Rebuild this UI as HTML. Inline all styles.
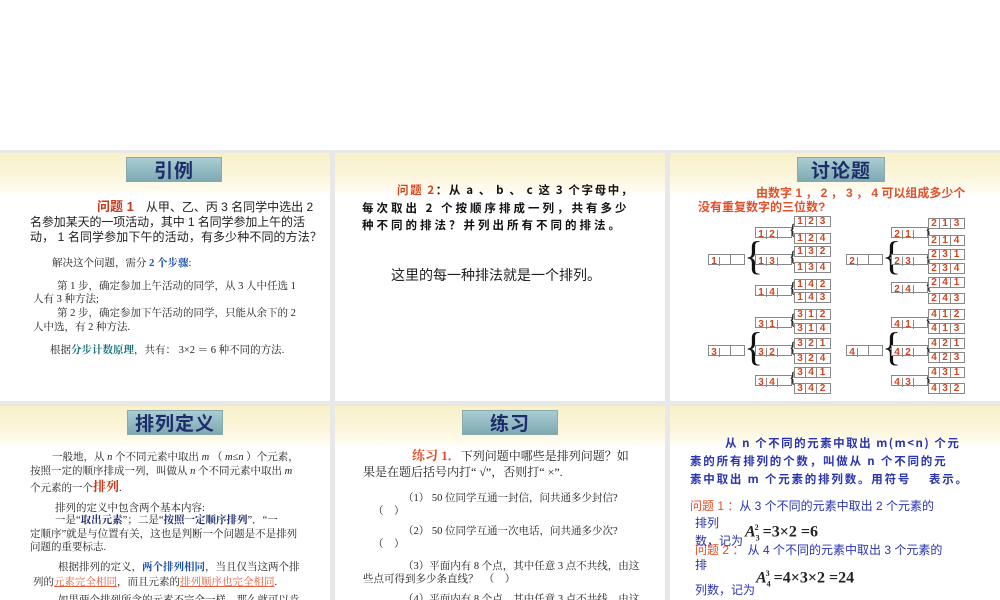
<!DOCTYPE html>
<html><head><meta charset="utf-8">
<style>
*{margin:0;padding:0;box-sizing:border-box}
body{width:1000px;height:600px;background:#fff;position:relative;overflow:hidden;font-family:"Liberation Serif","Noto Serif CJK SC","Noto Sans CJK SC",serif;color:#222}
.bg{position:absolute;left:0;top:150px;width:1000px;height:450px;background:#e8e8e8}
.p{position:absolute;background:#fff;overflow:hidden}
.band{position:absolute;left:0;top:0;width:100%;height:40px;background:linear-gradient(#f7f0c8,#fbf6dc 60%,#fffdf4);}
.t{position:absolute;height:25px;background:linear-gradient(#a9cdd3,#7fa9b1);border:1px solid #8aa;color:#1d2d6b;font:bold 19px/24px "Noto Sans CJK SC",sans-serif;text-align:center;letter-spacing:1px}
.l{position:absolute;white-space:nowrap;font-family:"Liberation Sans","Noto Sans CJK SC",sans-serif;font-size:11px;line-height:14px}
.s{font-family:"Liberation Serif","Noto Serif CJK SC",serif}
.red{color:#c8381a;font-weight:bold}
.blue{color:#1a4fa8;font-weight:bold}
.teal{color:#17707a;font-weight:bold}
.c{position:absolute;height:11px;border:1px solid #888;background:#fff;color:#d0461e;font:bold 10px/9px "Liberation Sans",sans-serif}
.c span{display:inline-block;width:11px;height:9px;text-align:center;border-right:1px solid #888}
.c span:last-child{border-right:none}
.br{position:absolute;font-family:"Liberation Serif",serif;color:#111}
.bt{color:#2a34b0;font-weight:bold;font-family:"Noto Sans CJK SC",sans-serif;font-size:11.5px}
.k{font-weight:bold;font-family:"Noto Sans CJK SC",sans-serif;font-size:11.5px;color:#111}
.b6{color:#2a34b0;font-size:12px}
</style></head><body>
<div class="bg"></div>

<div class="p" style="left:0;top:153px;width:330px;height:248px">
<div class="band"></div>
<div class="t" style="left:126px;top:4px;width:96px">引例</div>
<div class="l" style="left:97px;top:47px;font-size:12px"><span class="red" style="font-size:13px">问题 1</span>　从甲、乙、丙 3 名同学中选出 2</div>
<div class="l" style="left:30px;top:62px;font-size:12px;letter-spacing:-0.1px">名参加某天的一项活动，其中 1 名同学参加上午的活</div>
<div class="l" style="left:30px;top:77px;font-size:12px;letter-spacing:0.1px">动， 1 名同学参加下午的活动，有多少种不同的方法？</div>
<div class="l s" style="left:52px;top:104px;font-size:10.5px">解决这个问题，需分 <span class="blue">2 个步骤</span>:</div>
<div class="l s" style="left:57px;top:127px;font-size:10.5px">第 1 步，确定参加上午活动的同学，从 3 人中任选 1</div>
<div class="l s" style="left:33px;top:140px;font-size:10.5px">人有 3 种方法;</div>
<div class="l s" style="left:57px;top:154px;font-size:10.5px">第 2 步，确定参加下午活动的同学，只能从余下的 2</div>
<div class="l s" style="left:33px;top:168px;font-size:10.5px">人中选，有 2 种方法.</div>
<div class="l s" style="left:50px;top:191px;font-size:10.5px">根据<span class="teal">分步计数原理</span>，共有： 3×2 ＝ 6 种不同的方法.</div>
</div>

<div class="p" style="left:335px;top:153px;width:330px;height:248px">
<div class="band"></div>
<div class="l k" style="left:62px;top:30px;letter-spacing:1.6px"><span style="color:#d0461e">问题 2</span>：从 a 、 b 、 c 这 3 个字母中，</div>
<div class="l k" style="left:27px;top:48px;letter-spacing:3px">每次取出 2 个按顺序排成一列，共有多少</div>
<div class="l k" style="left:27px;top:65px;letter-spacing:3px">种不同的排法？并列出所有不同的排法。</div>
<div class="l" style="left:56px;top:113px;font-size:14px;line-height:18px;font-family:'Noto Sans CJK SC',sans-serif">这里的每一种排法就是一个排列。</div>
</div>

<div class="p" style="left:670px;top:153px;width:330px;height:248px">
<div class="band"></div>
<div class="t" style="left:127px;top:4px;width:88px">讨论题</div>
<div class="l" style="left:86px;top:33px;font-size:12px;color:#e0502a;font-weight:bold">由数字 1 ， 2 ， 3 ， 4 可以组成多少个</div>
<div class="l" style="left:28px;top:47px;font-size:12px;color:#e0502a;font-weight:bold">没有重复数字的三位数?</div>
</div>
<div id="tree"></div>

<div class="p" style="left:0;top:406px;width:330px;height:194px">
<div class="band"></div>
<div class="t" style="left:127px;top:4px;width:96px">排列定义</div>
<div class="l s" style="left:52px;top:45px;font-size:10.5px">一般地，从 <i>n</i> 个不同元素中取出 <i>m</i> （ <i>m</i>≤<i>n</i> ）个元素，</div>
<div class="l s" style="left:30px;top:59px;font-size:10.5px">按照一定的顺序排成一列，叫做从 <i>n</i> 个不同元素中取出 <i>m</i></div>
<div class="l s" style="left:30px;top:74px;font-size:10.5px">个元素的一个<span class="red" style="font-size:13px">排列</span>.</div>
<div class="l s" style="left:55px;top:96px;font-size:10.5px">排列的定义中包含两个基本内容:</div>
<div class="l s" style="left:55px;top:108px;font-size:10.5px">一是“<b style="color:#1d2d6b">取出元素</b>”；二是“<b style="color:#1d2d6b">按照一定顺序排列</b>”．“一</div>
<div class="l s" style="left:30px;top:122px;font-size:10.5px">定顺序”就是与位置有关，这也是判断一个问题是不是排列</div>
<div class="l s" style="left:30px;top:135px;font-size:10.5px">问题的重要标志.</div>
<div class="l s" style="left:58px;top:155px;font-size:10.5px">根据排列的定义，<span class="blue">两个排列相同</span>，当且仅当这两个排</div>
<div class="l s" style="left:33px;top:170px;font-size:10.5px">列的<u style="color:#e06040">元素完全相同</u>，而且元素的<u style="color:#e06040">排列顺序也完全相同</u>.</div>
<div class="l s" style="left:58px;top:188px;font-size:10.5px">如果两个排列所含的元素不完全一样，那么就可以肯</div>
</div>

<div class="p" style="left:335px;top:406px;width:330px;height:194px">
<div class="band"></div>
<div class="t" style="left:127px;top:4px;width:96px">练习</div>
<div class="l s" style="left:77px;top:43px;font-size:12px"><span class="red" style="color:#e0502a;font-size:13px">练习 1．</span>下列问题中哪些是排列问题？如</div>
<div class="l s" style="left:28px;top:59px;font-size:12px">果是在题后括号内打“ √”，否则打“ ×”.</div>
<div class="l s" style="left:68px;top:86px;font-size:10.5px">（1） 50 位同学互通一封信，问共通多少封信?</div>
<div class="l s" style="left:38px;top:99px;font-size:10.5px">（　）</div>
<div class="l s" style="left:68px;top:119px;font-size:10.5px">（2） 50 位同学互通一次电话，问共通多少次?</div>
<div class="l s" style="left:38px;top:132px;font-size:10.5px">（　）</div>
<div class="l s" style="left:68px;top:154px;font-size:10.5px">（3）平面内有 8 个点，其中任意 3 点不共线，由这</div>
<div class="l s" style="left:28px;top:167px;font-size:10.5px">些点可得到多少条直线？　（　）</div>
<div class="l s" style="left:68px;top:187px;font-size:10.5px">（4）平面内有 8 个点，其中任意 3 点不共线，由这</div>
</div>

<div class="p" style="left:670px;top:406px;width:330px;height:194px">
<div class="band"></div>
<div class="l bt" style="left:55px;top:30px;letter-spacing:1.5px">从 n 个不同的元素中取出 m(m&lt;n) 个元</div>
<div class="l bt" style="left:20px;top:48px;letter-spacing:1.8px">素的所有排列的个数，叫做从 n 个不同的元</div>
<div class="l bt" style="left:20px;top:66px;letter-spacing:1.8px">素中取出 m 个元素的排列数。用符号　 表示。</div>
<div class="l b6" style="left:20px;top:93px"><span style="color:#e0502a">问题 1 ：</span>从 3 个不同的元素中取出 2 个元素的</div>
<div class="l b6" style="left:25px;top:110px">排列</div>
<div class="l" style="left:75px;top:112px;font:bold 16px/20px 'Liberation Serif',serif"><i>A</i><sub style="font-size:8px">3</sub><sup style="font-size:8px;margin-left:-5px">2</sup> =3×2 =6</div>
<div class="l b6" style="left:25px;top:137px"><span style="color:#e0502a">问题 2 ：</span> 从 4 个不同的元素中取出 3 个元素的</div>
<div class="l b6" style="left:25px;top:128px">数，记为</div>
<div class="l b6" style="left:25px;top:152px">排</div>
<div class="l" style="left:86px;top:158px;font:bold 16px/20px 'Liberation Serif',serif"><i>A</i><sub style="font-size:8px">4</sub><sup style="font-size:8px;margin-left:-5px">3</sup> =4×3×2 =24</div>
<div class="l b6" style="left:25px;top:177px">列数，记为</div>
</div>

<script>
var h='';
function box(x,y,d){var s='<div class="c" style="left:'+x+'px;top:'+(y-5)+'px;width:'+(d.length*11+d.length-1+2)+'px">';for(var i=0;i<d.length;i++)s+='<span>'+d[i]+'</span>';return s+'</div>';}
function brace(x,y,hgt,big){return '<div class="br" style="left:'+x+'px;top:'+(y-hgt/2)+'px;font-size:'+(big?40:16)+'px;line-height:'+hgt+'px;height:'+hgt+'px">{</div>';}
var groups=[
 {rx:708,px:755,tx:794,root:259,r:'1',pairs:[[232,'12',[[221,'123'],[238,'124']]],[259,'13',[[251,'132'],[267,'134']]],[290,'14',[[284,'142'],[297,'143']]]]},
 {rx:708,px:755,tx:794,root:350,r:'3',pairs:[[322,'31',[[314,'312'],[328,'314']]],[350,'32',[[343,'321'],[358,'324']]],[380,'34',[[372,'341'],[388,'342']]]]},
 {rx:846,px:891,tx:928,root:259,r:'2',pairs:[[232,'21',[[223,'213'],[240,'214']]],[259,'23',[[254,'231'],[268,'234']]],[287,'24',[[282,'241'],[298,'243']]]]},
 {rx:846,px:891,tx:928,root:350,r:'4',pairs:[[322,'41',[[314,'412'],[328,'413']]],[350,'42',[[343,'421'],[357,'423']]],[380,'43',[[372,'431'],[388,'432']]]]}
];
groups.forEach(function(g){
 h+=box(g.rx,g.root,[g.r,'','']);
 h+=brace(g.rx+36,g.root-3,44,true);
 g.pairs.forEach(function(p){
  h+=box(g.px,p[0],[p[1][0],p[1][1],'']);
  h+=brace(g.px+34,p[0]-1,18,false);
  p[2].forEach(function(t){h+=box(g.tx,t[0],t[1].split(''));});
 });
});
document.getElementById('tree').innerHTML=h;
</script>
</body></html>
